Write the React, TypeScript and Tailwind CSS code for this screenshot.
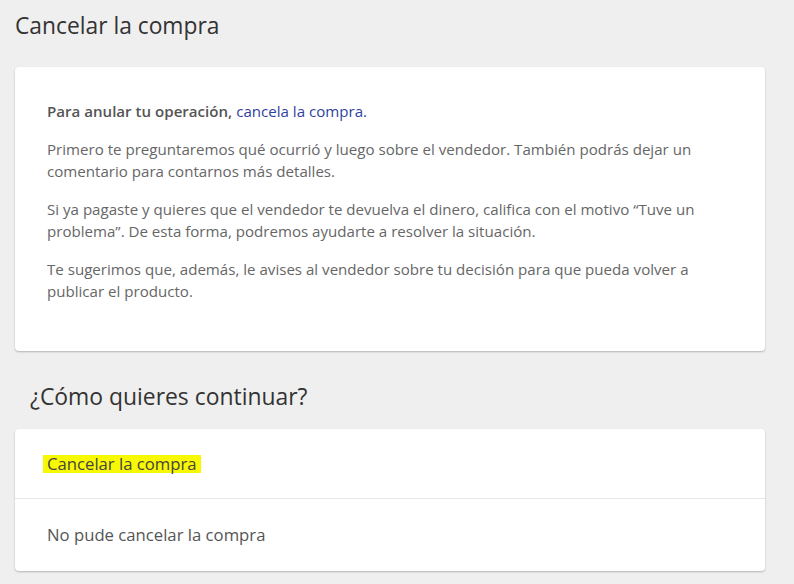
export default function App() {
  const font = { fontFamily: '"Open Sans", "Liberation Sans", sans-serif' };
  return (
    <div className="min-h-[584px] w-full bg-[#efefef] text-[#333]" style={font}>
      <div className="w-[750px] ml-[15px] pt-[10px] pb-[13px]">
        <h1 className="text-[22.8px] leading-[32px] text-[#333]">Cancelar la compra</h1>

        <div className="mt-[25px] rounded bg-white shadow-[0_1px_2px_rgba(0,0,0,0.25)] px-[32px] pt-[33px] pb-[49px] text-[15.1px] leading-[22px] text-[#666]">
          <p className="font-semibold text-[#555]">
            Para anular tu operación, <span className="font-normal text-[#2f3fa0]">cancela la compra.</span>
          </p>
          <p className="mt-[16px]">
            Primero te preguntaremos qué ocurrió y luego sobre el vendedor. También podrás dejar un comentario para contarnos más detalles.
          </p>
          <p className="mt-[16px]">
            Si ya pagaste y quieres que el vendedor te devuelva el dinero, califica con el motivo “Tuve un problema”. De esta forma, podremos ayudarte a resolver la situación.
          </p>
          <p className="mt-[16px]">
            Te sugerimos que, además, le avises al vendedor sobre tu decisión para que pueda volver a publicar el producto.
          </p>
        </div>

        <h2 className="mt-[30px] ml-[15px] text-[22.9px] leading-[32px] text-[#333]">¿Cómo quieres continuar?</h2>

        <div className="mt-[16px] rounded bg-white shadow-[0_1px_2px_rgba(0,0,0,0.25)] text-[16.7px] text-[#555]">
          <div className="h-[70px] flex items-center px-[28px] border-b border-[#e6e6e6]">
            <span className="bg-[#f8f800] px-[4px] leading-[18px] text-[#444]">Cancelar la compra</span>
          </div>
          <div className="h-[72px] flex items-center px-[32px]">
            <span>No pude cancelar la compra</span>
          </div>
        </div>
      </div>
    </div>
  );
}
